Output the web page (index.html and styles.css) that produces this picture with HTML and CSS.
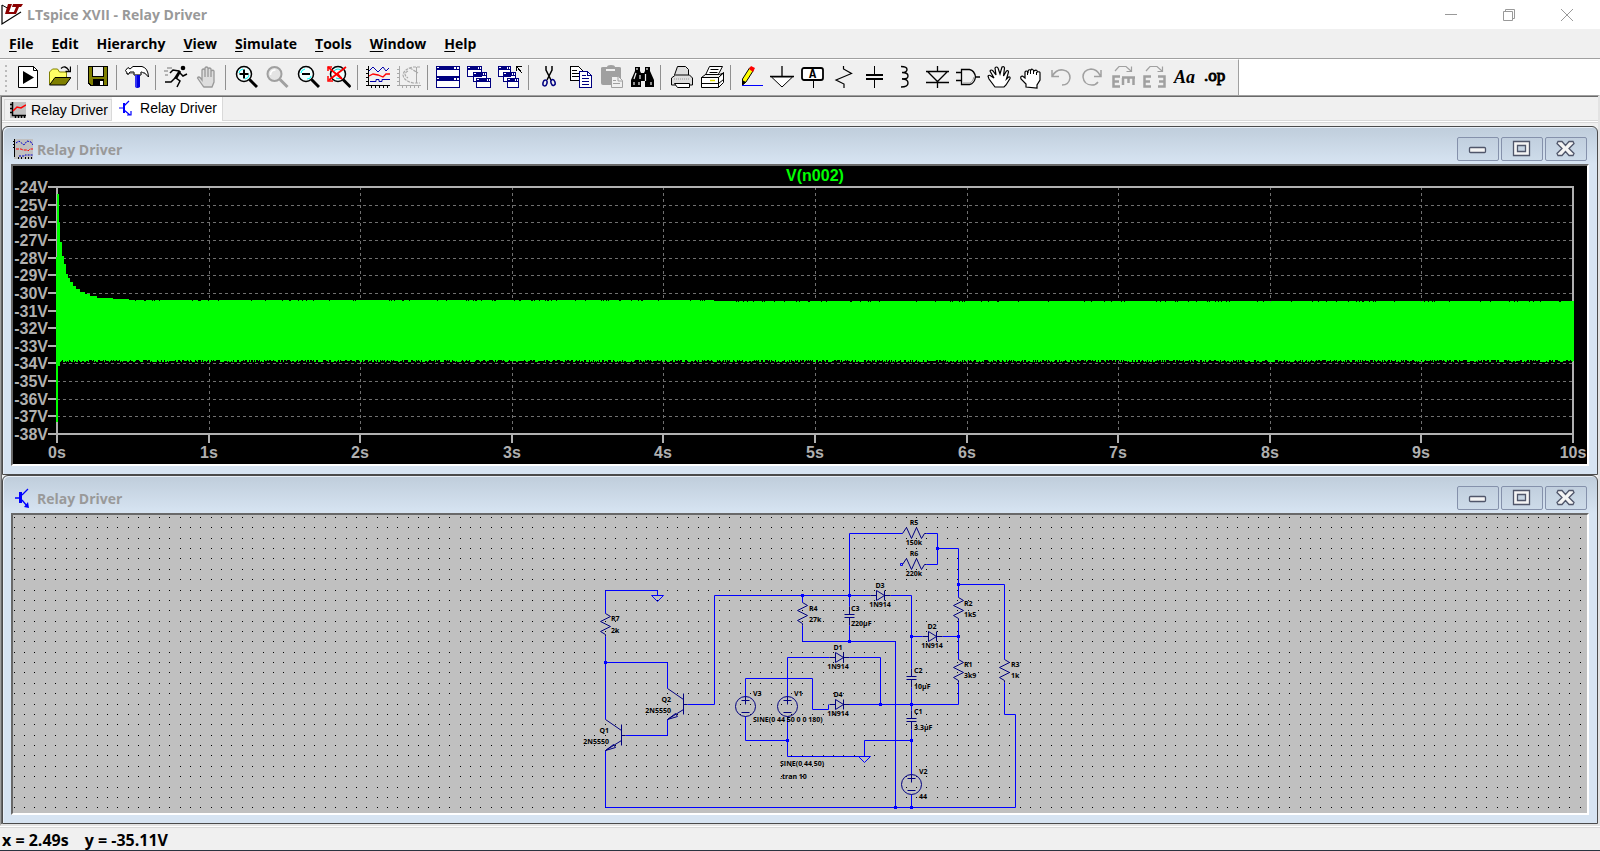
FILE: index.html
```html
<!DOCTYPE html>
<html lang="en">
<head>
    <meta charset="UTF-8">
    <meta name="viewport" content="width=device-width, initial-scale=1.0">
    <title>LTspice XVII - Relay Driver</title>
    <link rel="stylesheet" href="styles.css">
</head>
<body>
    <header class="titlebar">
        <svg class="app-icon" viewBox="0 0 22 22">
            <path d="M1 1V20L20 8" fill="#fff" stroke="#000" stroke-width="1.2"/>
            <path d="M1 1L8 5" stroke="#000"/>
            <path d="M7 0h4L8 8h5l-1 2H4zM12 0h10l-2 3h-2l-3 7h-3l3-7h-4z" fill="#8b0000"/>
        </svg>
        <h1 class="title">LTspice XVII - Relay Driver</h1>
        <div class="caption-buttons">
            <button class="caption" aria-label="Minimize"><svg viewBox="0 0 12 12"><path d="M0 5.5H12"/></svg></button>
            <button class="caption" aria-label="Restore"><svg viewBox="0 0 12 12"><path d="M.5 2.5h9v9h-9zM2.5 2.5v-2h9v9h-2"/></svg></button>
            <button class="caption" aria-label="Close"><svg viewBox="0 0 12 12"><path d="M0 0L12 12M12 0L0 12"/></svg></button>
        </div>
    </header>

    <nav class="menubar">
        <button class="menu"><u>F</u>ile</button>
        <button class="menu"><u>E</u>dit</button>
        <button class="menu">H<u>i</u>erarchy</button>
        <button class="menu"><u>V</u>iew</button>
        <button class="menu"><u>S</u>imulate</button>
        <button class="menu"><u>T</u>ools</button>
        <button class="menu"><u>W</u>indow</button>
        <button class="menu"><u>H</u>elp</button>
    </nav>

    <div class="toolbar-band">
        <div class="toolbar">
            <span class="grip"></span>
            <button class="tool" aria-label="New schematic"><svg viewBox="0 0 24 24"><path d="M2.5 1.5h15l4 4v17h-19z" fill="#fff" stroke="#000"/><path d="M17.5 1.5v4h4" fill="none" stroke="#000"/><path d="M7 6v13l11-6.500z"/></svg></button>
            <button class="tool" aria-label="Open"><svg viewBox="0 0 24 24"><path d="M2.500 19V7l3-3h5l2 3h7v6" fill="#ffff66" stroke="#808000"/><path d="M2.500 20L8 12.500h16L18.500 20z" fill="#808000" stroke="#000"/><path d="M14 3.500q4-4 8 2M23.500 1.500v5h-5" fill="none" stroke="#000" stroke-width="1.300"/></svg></button>
            <span class="sep"></span>
            <button class="tool" aria-label="Save"><svg viewBox="0 0 24 24" shape-rendering="crispEdges"><path d="M2 1h20v20H4l-2-2z"/><path d="M3 2h3v10h12V2h3v18h-3v-6H7v6H5l-2-2z" fill="#808000"/><path d="M7 2h10v9H7z" fill="#f0f0f0"/><path d="M14 16h3v4h-3z" fill="#fff"/></svg></button>
            <span class="sep"></span>
            <button class="tool" aria-label="Control panel"><svg viewBox="0 0 24 24"><path d="M.5 5.500L3 2.500 5 4l3-2.500h9Q23 3 23.500 12 20 7 16 7v3H9V7L5 7 3 9.500z" fill="#fff" stroke="#000"/><path d="M1 8l2 2 2-2h4v2h7V7q4 0 7 4" fill="none" stroke="#555"/><path d="M10 10h5v12q-2.500 2-5 0z" fill="#0000e0"/><path d="M11 10v12" stroke="#66f"/></svg></button>
            <span class="sep"></span>
            <button class="tool" aria-label="Run"><svg viewBox="0 0 24 24"><circle cx="19" cy="3" r="2.300"/><path d="M16 6L12 13l4 3-3 6M11 13l-4 4H1M15 6L9 5 6 8M16 8l3 3 4-2" fill="none" stroke="#000" stroke-width="1.500"/><path d="M15 5l-5 8 3 1 4-7z"/><path d="M3 3h5M0 6h4M1 10h3" stroke="#777"/></svg></button>
            <button class="tool" aria-label="Halt"><svg viewBox="0 0 24 24"><path d="M8 21L2.500 13q1-2 3 0L7 15V5q1.500-2 3 0v7V3q1.500-2 3 0v9V4q1.500-2 3 0v8V6q2-1.500 3 0v11l-2 5H9z" fill="#ddd" stroke="#999" stroke-width="1.300"/></svg></button>
            <span class="sep"></span>
            <button class="tool" aria-label="Zoom in"><svg viewBox="0 0 24 24"><circle cx="10" cy="9" r="7.500" fill="#f4ffff" stroke="#000" stroke-width="1.500"/><path d="M5 8q0-3 4-4M15 10q0 3-4 4" fill="none" stroke="#0ff"/><path d="M10 4.500v9M5.500 9h9" stroke="#000" stroke-width="2"/><path d="M15.500 14.500l7.500 7.500" stroke="#000" stroke-width="3"/></svg></button>
            <button class="tool" aria-label="Pan"><svg viewBox="0 0 24 24"><circle cx="9.500" cy="9" r="7" fill="#e4e4e4" stroke="#a0a0a0" stroke-width="2"/><path d="M5.500 10q0-5 5-5" fill="none" stroke="#fff" stroke-width="1.500"/><path d="M15 14.500l7.500 7.500" stroke="#a0a0a0" stroke-width="3"/></svg></button>
            <button class="tool" aria-label="Zoom back"><svg viewBox="0 0 24 24"><circle cx="10" cy="9" r="7.500" fill="#f4ffff" stroke="#000" stroke-width="1.500"/><path d="M5 8q0-3 4-4M15 11q0 3-4 3" fill="none" stroke="#0ff"/><path d="M6 9h8" stroke="#000" stroke-width="2"/><path d="M15.500 14.500l7.500 7.500" stroke="#000" stroke-width="3"/></svg></button>
            <button class="tool" aria-label="Zoom full extents"><svg viewBox="0 0 24 24"><circle cx="11" cy="9" r="7.500" fill="#eff" stroke="#000" stroke-width="1.500"/><path d="M7 6q4-4 8 0M15 12q-3 3-6 1" fill="none" stroke="#0dd"/><path d="M16 14.500l7.500 7.500" stroke="#000" stroke-width="3"/><path d="M1 2l14 12M19 2L2 15" stroke="#f00" stroke-width="1.800"/><path d="M1 11v5h5M1 6V2h4M11 9l4 5" fill="none" stroke="#f00" stroke-width="1.500"/></svg></button>
            <span class="sep"></span>
            <button class="tool" aria-label="Autorange"><svg viewBox="0 0 24 24"><path d="M2.500 1v19.500M0 20.500h24M0 4.500h3M0 8.500h3M0 12.500h3M0 16.500h3M5.500 20v3M9.500 20v3M13.500 20v3M17.500 20v3M21.500 20v3" stroke="#000" shape-rendering="crispEdges"/><path d="M3 6l4-4 5 5 5-5 3 4 3-3" fill="none" stroke="#00a"/><path d="M3 11l4-2 5 1 5 2 3-3h4" fill="none" stroke="#f00" stroke-width="1.300"/><path d="M4 16.500h6v-2h3v2h3v-2h8" fill="none" stroke="#00a"/></svg></button>
            <button class="tool" aria-label="Smith chart"><svg viewBox="0 0 24 24" fill="none" stroke="#a8a8a8"><path d="M2.500 1v19.500M0 20.500h24M0 4.500h3M0 8.500h3M0 12.500h3M0 16.500h3M5.500 20v3M9.500 20v3M13.500 20v3M17.500 20v3M21.500 20v3M19.500 2v16" shape-rendering="crispEdges"/><path d="M23 2h-7Q7 4 6 10q1 6 10 8h7M11 6q-6 3 0 7M13 3l8 5" stroke-width="1.200" stroke-dasharray="3 1"/></svg></button>
            <span class="sep"></span>
            <button class="tool" aria-label="Tile windows"><svg viewBox="0 0 24 24" shape-rendering="crispEdges"><path d="M0 1h24v22H0z" fill="#000080"/><path d="M1 5h22v6H1zM1 16h22v6H1z" fill="#fff"/><path d="M1 2h2v1H1zM18 2h2v2h-2zM21 2h2v2h-2zM1 13h2v1H1zM18 13h2v2h-2zM21 13h2v2h-2z" fill="#fff"/></svg></button>
            <button class="tool" aria-label="Cascade windows"><svg viewBox="0 0 24 24" shape-rendering="crispEdges"><g stroke="#000080" fill="#fff"><path d="M.5 1.500h14v10H.5zM6.500 7.500h13v9h-13zM9.500 13.500h14v9h-14z"/></g><path d="M0 1h15v4H0zM6 7h14v4H6zM9 13h15v4H9z" fill="#000080"/><path d="M1 2h2v1H1zM11 2h1v2h-1zM13 2h1v2h-1zM7 8h2v1H7zM16 8h1v2h-1zM18 8h1v2h-1zM10 14h2v1h-2zM20 14h1v2h-1zM22 14h1v2h-1z" fill="#fff"/></svg></button>
            <button class="tool" aria-label="Close all windows"><svg viewBox="0 0 24 24" shape-rendering="crispEdges"><g stroke="#000080" fill="#fff"><path d="M.5 1.500h12v10H.5zM5.500 7.500h12v9h-12zM9.500 13.500h11v9h-11z"/></g><path d="M0 1h13v4H0zM5 7h13v4H5zM9 13h12v4H9z" fill="#000080"/><path d="M1 2h2v1H1zM9 2h1v2H9zM11 2h1v2h-1zM6 8h2v1H6zM14 8h1v2h-1zM16 8h1v2h-1zM10 14h2v1h-2zM17 14h1v2h-1zM19 14h1v2h-1z" fill="#fff"/><path d="M18.500 6V1.500H24M19 2l5 6" fill="none" stroke="#000"/></svg></button>
            <span class="sep"></span>
            <button class="tool" aria-label="Cut"><svg viewBox="0 0 24 24" fill="none"><path d="M9 1v4l5 10M15 1v4l-5 10" stroke="#000" stroke-width="1.500"/><ellipse cx="8" cy="18" rx="2" ry="3" transform="rotate(15 8 18)" stroke="#000080" stroke-width="1.500"/><ellipse cx="16" cy="17.500" rx="2" ry="3" transform="rotate(-20 16 17.500)" stroke="#000080" stroke-width="1.500"/></svg></button>
            <button class="tool" aria-label="Copy"><svg viewBox="0 0 24 24" shape-rendering="crispEdges"><path d="M2.500 1.500h8l4 4v10h-12z" fill="#fff" stroke="#000"/><path d="M4 5h5M4 8h7M4 11h7" stroke="#000" fill="none"/><path d="M11.500 6.500h8l4 4v12h-12z" fill="#fff" stroke="#000080"/><path d="M19.500 6.500v4h4M14 10.500h4M14 13.500h7M14 16.500h7M14 19.500h7" stroke="#000080" fill="none"/></svg></button>
            <button class="tool" aria-label="Paste"><svg viewBox="0 0 24 24"><path d="M2 3q0-1 2-1h4q0-2 4-2t4 2h4q2 0 2 1v17H4q-2 0-2-2z" fill="#a0a0a0"/><path d="M7 5h9" stroke="#f0f0f0" stroke-width="2"/><path d="M12.500 11.500h7l4 4v7h-11z" fill="#f0f0f0" stroke="#a0a0a0"/><path d="M19 12v4h4M14 15.500h3M14 18.500h7" stroke="#a0a0a0" fill="none"/></svg></button>
            <button class="tool" aria-label="Find"><svg viewBox="0 0 24 24"><path d="M5 2h5v4l1 2h3l1-2V2h5v4l4 9v7h-9v-6h-4v6H1v-7l4-9z"/><path d="M7 3v2M17 3v2M6 8L4 14M15.500 9v7M9 17v3M4 17v3M21 17v3M10 10v4" stroke="#eee" stroke-width="1.200"/></svg></button>
            <span class="sep"></span>
            <button class="tool" aria-label="Print setup"><svg viewBox="0 0 24 24"><path d="M5.500 10l3-8.500h8l3 3V10" fill="#ddd" stroke="#000"/><path d="M2.500 13l4-3h14l3 3v7h-21z" fill="#ddd" stroke="#000"/><path d="M5.500 18.500h15v4h-12z" fill="#fff" stroke="#000"/><path d="M5 14h16" stroke="#999" stroke-dasharray="1 1"/></svg></button>
            <button class="tool" aria-label="Print"><svg viewBox="0 0 24 24"><path d="M5.500 10L9.500 1.500h13L18 10" fill="#fff" stroke="#000"/><path d="M10.500 4.500h8M9.500 7.500h8" stroke="#000"/><path d="M1.500 12.500h17v10h-17zM18.500 12.500l5-5v10l-5 5" fill="#fff" stroke="#000"/><path d="M1.500 12.500l4-3h14l4-1.500-5 4.500zM1.500 18.500h17l5-4" fill="none" stroke="#000"/><path d="M10 15.500h5" stroke="#dd0" stroke-width="1.500"/></svg></button>
            <span class="sep"></span>
            <button class="tool" aria-label="Wire"><svg viewBox="0 0 24 24"><path d="M3.500 20v-6l7-11h3.500v3L7 17z" fill="#ff0" stroke="#000"/><path d="M3 15v6l4-4z"/><path d="M10 4l2-3 4 2-2 4z" fill="#f00"/><path d="M3 20.500h21" stroke="#00f" shape-rendering="crispEdges"/></svg></button>
            <button class="tool" aria-label="Ground"><svg viewBox="0 0 24 24"><path d="M12 1v10.500M0 11.500h24" stroke="#000" stroke-width="1.300"/><path d="M1.500 12h21L12 22z" fill="#fff" stroke="#000"/></svg></button>
            <button class="tool" aria-label="Label net"><svg viewBox="0 0 24 24"><rect x="1" y="3" width="21" height="12" rx="2" fill="#fff" stroke="#000" stroke-width="1.800"/><path d="M12.500 16v7" stroke="#000"/><text class="icon-mono" x="8" y="13">A</text></svg></button>
            <button class="tool" aria-label="Resistor"><svg viewBox="0 0 24 24"><path d="M11.500 1v3l8 4.500L4 15l8 4v4" fill="none" stroke="#000" stroke-width="1.200"/></svg></button>
            <button class="tool" aria-label="Capacitor"><svg viewBox="0 0 24 24" shape-rendering="crispEdges"><path d="M11.500 1v8M11.500 15v8" stroke="#000"/><path d="M3 10h17M3 14h17" stroke="#000" stroke-width="2"/></svg></button>
            <button class="tool" aria-label="Inductor"><svg viewBox="0 0 24 24"><path d="M7 1.500q6 0 6 3t-5 3q6 0 6 3.500t-6 3q6 0 6 4t-7 4" fill="none" stroke="#000" stroke-width="1.400"/></svg></button>
            <button class="tool" aria-label="Diode"><svg viewBox="0 0 24 24"><path d="M12.500 1v5M12.500 17v6M1 6.500h23M1 17.500h23M2.500 6.500l10 10 10-10" fill="none" stroke="#000" stroke-width="1.300"/></svg></button>
            <button class="tool" aria-label="Component"><svg viewBox="0 0 24 24"><path d="M5.500 4.500h8q5 1 6 7.500-1 6.500-6 7.500h-8zM0 7.500h5.500M0 15.500h5.500M19 12h5" fill="none" stroke="#000" stroke-width="1.300"/><path d="M7 18h7q3-1 4-6" fill="none" stroke="#999"/></svg></button>
            <button class="tool" aria-label="Move"><svg viewBox="0 0 24 24"><path d="M8 22L2 14l-1-3q1-1.500 3 0l3 2-4-7q1-2 3 0l3 4-1-7q1.500-2 3 0l2 6 2-7q2-1 2.500 1l-1 8 3-5q2-1 2 1l-2 7 2-2q2-.5 1.500 1.500L19 20l-2 2z" fill="#fff" stroke="#000" stroke-width="1.200"/></svg></button>
            <button class="tool" aria-label="Drag"><svg viewBox="0 0 24 24"><path d="M8 22v-3L3 14q-1-3 1.500-3l2.500 2V7q1-2 3 0 0-3 3-2 1-2 3 1 3-2 3.500 1 3-1 2.500 2v6l-3 5v3z" fill="#fff" stroke="#000" stroke-width="1.200"/><path d="M9.500 7v3M12.500 5v4M15.500 6v3M18.500 7v3" stroke="#000"/></svg></button>
            <button class="tool" aria-label="Undo"><svg viewBox="0 0 24 24" fill="none" stroke="#a0a0a0" stroke-width="1.500"><path d="M3 5v6.500h7M3.500 11Q7 4 14 5q7 1 7 8-1 7-8 7"/></svg></button>
            <button class="tool" aria-label="Redo"><svg viewBox="0 0 24 24" fill="none" stroke="#a0a0a0" stroke-width="1.500"><path d="M21 5v6.500h-7M20.500 11Q17 4 11 4q-8 1-8 8 1 8 9 8 4 0 6-3"/></svg></button>
            <button class="tool" aria-label="Rotate"><svg viewBox="0 0 24 24" fill="none" stroke="#a0a0a0"><path d="M4 6l4-4.500h7L20 6M20.500 1.500v5h-5" stroke-width="1.200"/><path d="M9 11.500H2.500v10H9M2 16.500h6M11 12.500h13M12 13v7M17.500 13v5M22.500 13v7" stroke-width="2.500"/></svg></button>
            <button class="tool" aria-label="Mirror"><svg viewBox="0 0 24 24" fill="none" stroke="#a0a0a0"><path d="M4 6l4-4.500h7L20 6M20.500 1.500v5h-5" stroke-width="1.200"/><path d="M9 11.500H2.500v10H9M2 16.500h6M16 11.500h6.500v10H16M23 16.500h-6" stroke-width="2.500"/></svg></button>
            <button class="tool" aria-label="Text"><svg viewBox="0 0 24 24"><text class="icon-serif" x="1" y="18">Aa</text></svg></button>
            <button class="tool" aria-label="SPICE directive"><svg viewBox="0 0 24 24"><text class="icon-op" x="0" y="16">.op</text></svg></button>
        </div>
    </div>

    <main class="workspace">
        <div class="tabs" role="tablist">
            <button class="tab" role="tab">
                <svg viewBox="0 0 16 16"><path d="M0 0h16v16H0z" fill="#c0c0c0"/><path d="M2.500 0v13.500H16M0 2.500h3M0 6.500h3M0 10.500h3M5.500 13v3M8.500 13v3M11.500 13v3M14.500 13v3" stroke="#000" stroke-width="1.500" fill="none"/><path d="M3 9l4-4 4 1 5-3" fill="none" stroke="#f00" stroke-width="1.500"/></svg>
                Relay Driver
            </button>
            <button class="tab active" role="tab" aria-selected="true">
                <svg viewBox="0 0 16 16"><path d="M0 8h4M10 1L5 6M5 10l6 5M8 15h4v-4" stroke="#00f" stroke-width="1.200" fill="none"/><path d="M4 3h2v10H4z" fill="#00f"/></svg>
                Relay Driver
            </button>
        </div>

        <section class="child">
            <div class="child-title">
                <svg class="child-icon" viewBox="0 0 20 20"><path d="M1 0h19v20H1z" fill="#c0c0c0"/><path d="M1.500 0v18M0 2.500h2M0 5.500h2M0 8.500h2M5.500 18v2M8.500 18v2M12.500 18v2M15.500 18v2M18.500 18v2" stroke="#000" shape-rendering="crispEdges"/><path d="M3 4l3-2 5 4 3-4 4 1 2 3M6 17h5l1-1h8" fill="none" stroke="#00c" stroke-dasharray="2 1"/><path d="M3 10h5l2 1h4l1 1 2-2h3" fill="none" stroke="#f00" stroke-dasharray="3 1"/></svg>
                <h2 class="child-name">Relay Driver</h2>
                <div class="child-buttons">
                    <button class="ctl" aria-label="Minimize"><svg viewBox="0 0 18 16"><rect x=".5" y="6.500" width="16" height="5" rx="1"/></svg></button>
                    <button class="ctl" aria-label="Maximize"><svg viewBox="0 0 18 16"><path d="M.5.5h16v14H.5zM4.500 4.500v6h8v-6z" fill-rule="evenodd"/></svg></button>
                    <button class="ctl" aria-label="Close"><svg viewBox="0 0 18 16"><path d="M1 .5h4l3.500 4 3.500-4h4l1 2-5 5 5 5-1 2h-4l-3.500-4-3.500 4H1l-1-2 5-5-5-5z"/></svg></button>
                </div>
            </div>
            <div class="view">
                <svg id="plot" class="plot" viewBox="0 0 1574 298"></svg>
            </div>
        </section>

        <section class="child">
            <div class="child-title">
                <svg class="child-icon" viewBox="0 0 20 20"><path d="M2 10h5M9 7l6-6M9 12l5 6" stroke="#00f" stroke-width="1.300" fill="none"/><path d="M6 4h3v11H6zM16 20l-5-1 4-5z" fill="#00f"/></svg>
                <h2 class="child-name">Relay Driver</h2>
                <div class="child-buttons">
                    <button class="ctl" aria-label="Minimize"><svg viewBox="0 0 18 16"><rect x=".5" y="6.500" width="16" height="5" rx="1"/></svg></button>
                    <button class="ctl" aria-label="Maximize"><svg viewBox="0 0 18 16"><path d="M.5.5h16v14H.5zM4.500 4.500v6h8v-6z" fill-rule="evenodd"/></svg></button>
                    <button class="ctl" aria-label="Close"><svg viewBox="0 0 18 16"><path d="M1 .5h4l3.500 4 3.500-4h4l1 2-5 5 5 5-1 2h-4l-3.500-4-3.500 4H1l-1-2 5-5-5-5z"/></svg></button>
                </div>
            </div>
            <div class="view">
                <svg class="schematic" viewBox="0 0 1574 298">
                    <defs>
                        <g id="res"><path d="M0 0L5 3-5 8 5 13-5 18 0 21V23"/></g>
                        <g id="resh"><path d="M0 0L4-6 9 5 14-6 19 5 22 0H24"/></g>
                        <g id="cap"><path d="M-5 0H5M-5 3H5M0-8V0M0 3V11"/></g>
                        <g id="diode"><path d="M-10 0H-4M-4-5V5L4 0zM4-5V5M4 0H10"/></g>
                        <g id="npn"><path d="M0 0L16 11M16 5V26M16 16H20M16 21L0 31M0 31L8 25L10 28z"/></g>
                        <g id="src"><circle r="10"/><path d="M-4-6H4M0-10V-2M-4 6H4"/></g>
                        <g id="gnd"><path d="M-6 0H6L0 6z"/></g>
                    </defs>
                    <path id="dots" class="dots"/>
                    <g transform="translate(.5 .5)">
                        <path class="wire" d="M644 80V75H592V98M592 121V204M592 147H654V173M654 204V220H612M592 235V292H1002V199H991V167
                            M674 189H701V80H857M789 80V87M789 110V126H882V292M836 91V18H889M836 110V126M913 18H924V49H913
                            M924 33H945V82M945 69H991V144M945 105V144M945 167V189H835M877 80H898V153M898 121H909M929 121H945
                            M898 172V195M898 214V259M898 279V292M898 225H851V241H774V201M774 182V142H816M836 142H867V189
                            M732 182V163H799V194H815V189M732 201V225H774"/>
                        <path class="node" d="M591 146h3v3h-3zM788 79h3v3h-3zM835 79h3v3h-3zM835 125h3v3h-3zM923 32h3v3h-3zM944 68h3v3h-3zM944 120h3v3h-3zM897 120h3v3h-3zM897 188h3v3h-3zM866 188h3v3h-3zM897 224h3v3h-3zM773 224h3v3h-3zM881 291h3v3h-3zM897 291h3v3h-3z" transform="translate(-.5 -.5)"/>
                        <path class="wire" d="M887 48h2v2h-2z"/>
                        <g class="part">
                            <use href="#res" x="592" y="98"/>
                            <use href="#res" x="789" y="87"/>
                            <use href="#res" x="945" y="82"/>
                            <use href="#res" x="945" y="144"/>
                            <use href="#res" x="991" y="144"/>
                            <use href="#resh" x="889" y="18"/>
                            <use href="#resh" x="889" y="49"/>
                            <use href="#cap" x="836" y="99"/>
                            <use href="#cap" x="898" y="161"/>
                            <use href="#cap" x="898" y="203"/>
                            <use href="#diode" x="867" y="80"/>
                            <use href="#diode" x="919" y="121"/>
                            <use href="#diode" x="826" y="142"/>
                            <use href="#diode" x="826" y="189"/>
                            <use href="#npn" x="654" y="173"/>
                            <use href="#npn" x="592" y="204"/>
                            <use href="#src" x="732" y="191"/>
                            <use href="#src" x="774" y="191"/>
                            <use href="#src" x="898" y="269"/>
                        </g>
                        <g class="wire">
                            <use href="#gnd" x="644" y="80"/>
                            <use href="#gnd" x="851" y="241"/>
                        </g>
                    </g>
                    <g class="label">
                        <text x="598" y="106">R7</text><text x="598" y="118">2k</text>
                        <text x="796" y="96">R4</text><text x="796" y="107">27k</text>
                        <text x="838" y="96">C3</text><text x="838" y="111">220µF</text>
                        <text x="951" y="91">R2</text><text x="951" y="102">1k5</text>
                        <text x="951" y="152">R1</text><text x="951" y="163">3k9</text>
                        <text x="998" y="152">R3</text><text x="998" y="163">1k</text>
                        <text x="901" y="158">C2</text><text x="901" y="174">10µF</text>
                        <text x="901" y="199">C1</text><text x="901" y="215">3.3µF</text>
                        <text x="906" y="259">V2</text><text x="906" y="284">44</text>
                        <text x="740" y="181">V3</text><text x="740" y="207">SINE(0 44 50 0 0 180)</text>
                        <text x="781" y="181">V1</text><text x="767" y="251">SINE(0 44 50)</text>
                        <text x="767" y="264">.tran 10</text>
                    </g>
                    <g class="label mid">
                        <text x="901" y="10">R5</text><text x="901" y="30">150k</text>
                        <text x="901" y="41">R6</text><text x="901" y="61">220k</text>
                        <text x="867" y="73">D3</text><text x="867" y="92">1N914</text>
                        <text x="919" y="114">D2</text><text x="919" y="133">1N914</text>
                        <text x="825" y="135">D1</text><text x="825" y="154">1N914</text>
                        <text x="825" y="182">D4</text><text x="825" y="201">1N914</text>
                    </g>
                    <g class="label end">
                        <text x="658" y="187">Q2</text><text x="658" y="198">2N5550</text>
                        <text x="596" y="218">Q1</text><text x="596" y="229">2N5550</text>
                    </g>
                </svg>
            </div>
        </section>
    </main>

    <footer class="statusbar">
        <span>x = 2.49s</span>
        <span>y = -35.11V</span>
    </footer>

    <script src="script.js"></script>
</body>
</html>
```

FILE: styles.css
```css
* {
    box-sizing: border-box;
}
body {
    margin: 0;
    min-height: 100vh;
    display: flex;
    flex-direction: column;
    background: #f0f0f0;
    color: #000;
    font-family: "Open Sans", "Noto Sans", sans-serif;
    font-size: 14px;
}
button {
    margin: 0;
    padding: 0;
    border: none;
    background: none;
    color: inherit;
    font: inherit;
}
svg {
    display: block;
}
h1, h2 {
    margin: 0;
    font-size: 14px;
    font-weight: bold;
    color: #999;
}

/* main title bar */
.titlebar {
    display: flex;
    align-items: center;
    height: 29px;
    padding: 0 4px 0 1px;
    background: #fff;
}
.app-icon {
    width: 22px;
    height: 22px;
    margin-right: 4px;
}
.caption-buttons {
    display: flex;
    margin-left: auto;
}
.caption {
    width: 58px;
    height: 29px;
    padding-left: 23px;
}
.caption svg {
    width: 12px;
    height: 12px;
    fill: none;
    stroke: #999;
}

.menubar {
    display: flex;
    height: 30px;
    border-bottom: 1px solid #a0a0a0;
}
.menu {
    padding: 0 9px;
    font-weight: bold;
}
.menu u {
    text-underline-offset: 2px;
}

/* toolbar */
.toolbar-band {
    display: flex;
    background: #fff;
}
.toolbar {
    display: flex;
    height: 36px;
    padding-right: 6px;
    background: #f0f0f0;
    border-top: 1px solid #fff;
    border-right: 1px solid #a0a0a0;
}
.grip {
    width: 2px;
    margin: 5px 6px 3px 5px;
    background: repeating-linear-gradient(#bbb 0 2px, transparent 2px 5px);
}
.tool {
    width: 31px;
    padding: 0 4px 1px 3px;
}
.tool svg {
    width: 24px;
    height: 24px;
}
.sep {
    width: 1px;
    margin: 5px 5px 5px 2px;
    background: #909090;
}
.icon-mono {
    font: bold 12px "Liberation Mono", monospace;
}
.icon-serif {
    font: italic bold 18px "Liberation Serif", serif;
}
.icon-op {
    font: 17px "Liberation Serif", serif;
    stroke: #000;
}

/* MDI area */
.workspace {
    flex: 1;
    padding: 1px 0 0 1px;
    border: 1px solid #a0a0a0;
    border-right: 2px solid #e3e3e3;
    border-bottom: 2px solid #e3e3e3;
    box-shadow: inset 1px 1px 0 #696969;
}
.tabs {
    display: flex;
    align-items: flex-end;
    height: 24px;
    margin-bottom: 5px;
    padding-left: 2px;
    box-shadow: 0 1px 0 #fff, 0 2px 0 #d9d9d9, inset 0 -1px 0 #d9d9d9;
    font-family: "Liberation Sans", Arial, sans-serif;
}
.tab {
    display: flex;
    align-items: center;
    gap: 5px;
    height: 22px;
    padding: 0 3px 0 5px;
    border: 1px solid #d9d9d9;
}
.tab svg {
    width: 16px;
    height: 16px;
}
.tab.active {
    height: 24px;
    padding: 0 5px 3px 7px;
    border: none;
    border-right: 1px solid #d9d9d9;
    background: #fff;
}

.child {
    padding: 0 8px 8px;
    border: 1px solid #4b4b4b;
    border-radius: 6px 6px 0 0;
    background: linear-gradient(#bfcddb, #d7e4f2 37px);
    box-shadow: inset 1px 1px 0 #e8eff7;
}
.child-title {
    display: flex;
    align-items: center;
    height: 37px;
    padding: 7px 2px 0;
}
.child-icon {
    width: 20px;
    height: 20px;
    margin-right: 4px;
}
.child-buttons {
    display: flex;
    gap: 2px;
    margin-left: auto;
}
.ctl {
    width: 42px;
    height: 24px;
    padding: 0 0 1px 11px;
    border: 1px solid #8591ab;
    border-radius: 2px;
    background: linear-gradient(#c1cfde, #cddbe9);
}
.ctl svg {
    width: 18px;
    height: 16px;
    overflow: visible;
    fill: #f4f4f4;
    stroke: #50566a;
    stroke-width: 1.3px;
}
.view {
    border: 2px solid #fff;
    border-top-color: #696969;
    border-left-color: #696969;
    background: #c0c0c0;
}
.view svg {
    width: 100%;
    height: auto;
}

/* waveform */
.plot {
    background: #000;
    shape-rendering: crispEdges;
    font: bold 16px "Liberation Sans", Arial, sans-serif;
}
.plot .grid {
    stroke: #707070;
    stroke-dasharray: 3 3;
}
.plot .axis {
    fill: none;
    stroke: #b0b0b0;
    stroke-width: 2;
}
.plot .trace {
    stroke: #0f0;
}
.plot text {
    fill: #b0b0b0;
    text-anchor: middle;
}
.plot .volts {
    text-anchor: end;
}
.plot .trace-name {
    fill: #0f0;
}

/* schematic */
.dots {
    fill: #000;
    shape-rendering: crispEdges;
}
.wire {
    fill: none;
    stroke: #00f;
}
.node {
    fill: #00f;
}
.part {
    fill: none;
    stroke: #000080;
}
.label {
    font-size: 7px;
    font-weight: bold;
}
.mid {
    text-anchor: middle;
}
.end {
    text-anchor: end;
}

.statusbar {
    display: flex;
    gap: 16px;
    height: 25px;
    padding: 4px 2px 0;
    border-bottom: 1px solid #2a3440;
    box-shadow: inset 0 1px 0 #fff, inset 0 2px 0 #d9d9d9;
    font-size: 16px;
    line-height: 20px;
    font-weight: bold;
}
```

FILE: script.js
```javascript
const NS = 'http://www.w3.org/2000/svg';
const plot = document.getElementById('plot');

// plot frame inside the view
const left = 44, right = 1560, top0 = 21, bottom = 268;

function add(tag, attrs, text) {
    const el = document.createElementNS(NS, tag);
    for (const key in attrs) el.setAttribute(key, attrs[key]);
    if (text) el.textContent = text;
    plot.appendChild(el);
}

let grid = '';
let ticks = '';
for (let v = 0; v <= 14; v++) {
    const y = Math.round(top0 + v * (bottom - top0) / 14);
    if (v > 0 && v < 14) grid += `M${left} ${y + 0.5}H${right}`;
    ticks += `M35 ${y}H${left}`;
    add('text', { x: 35, y: y + 6, class: 'volts' }, `${-24 - v}V`);
}
for (let s = 0; s <= 10; s++) {
    const x = Math.round(left + s * (right - left) / 10);
    if (s > 0 && s < 10) grid += `M${x + 0.5} ${top0}V${bottom}`;
    ticks += `M${x} ${bottom}V277`;
    add('text', { x: x, y: 292 }, `${s}s`);
}
add('path', { d: grid, class: 'grid' });
add('path', { d: `M${left} ${top0}H${right}V${bottom}H${left}Z` + ticks, class: 'axis' });
add('text', { x: 802, y: 15, class: 'trace-name' }, 'V(n002)');

// upper envelope of the start-up transient: [x, y]
const decay = [[43, 91], [44, 28], [46, 57], [47, 76], [49, 90], [51, 98], [53, 108], [55, 112],
    [57, 116], [60, 120], [63, 123], [67, 126], [72, 128], [77, 130], [84, 132], [100, 133], [116, 134]];

let seed = 7;
function rand() {
    seed = (seed * 16807) % 2147483647;
    return seed / 2147483647;
}

let trace = '';
for (let x = 43; x <= right; x++) {
    let y1 = x > 700 ? 135 : 134;
    for (const [dx, dy] of decay) {
        if (x >= dx && x < 117) y1 = dy;
    }
    if (x > 116 && rand() < 0.1) y1 += 1;
    let y2 = 194 + Math.floor(rand() * 3);
    if (x < 45) y2 = 256;
    else if (x < 47) y2 = 200;
    trace += `M${x + 0.5} ${y1}V${y2}`;
}
add('path', { d: trace, class: 'trace' });

// schematic grid dots, snapped to whole pixels
let dots = '';
for (let r = 0; r < 29; r++) {
    for (let c = 0; c < 152; c++) {
        dots += `M${Math.floor(1.2 + c * 10.37)} ${Math.floor(2.45 + r * 10.37)}h1v1h-1z`;
    }
}
document.getElementById('dots').setAttribute('d', dots);
```
